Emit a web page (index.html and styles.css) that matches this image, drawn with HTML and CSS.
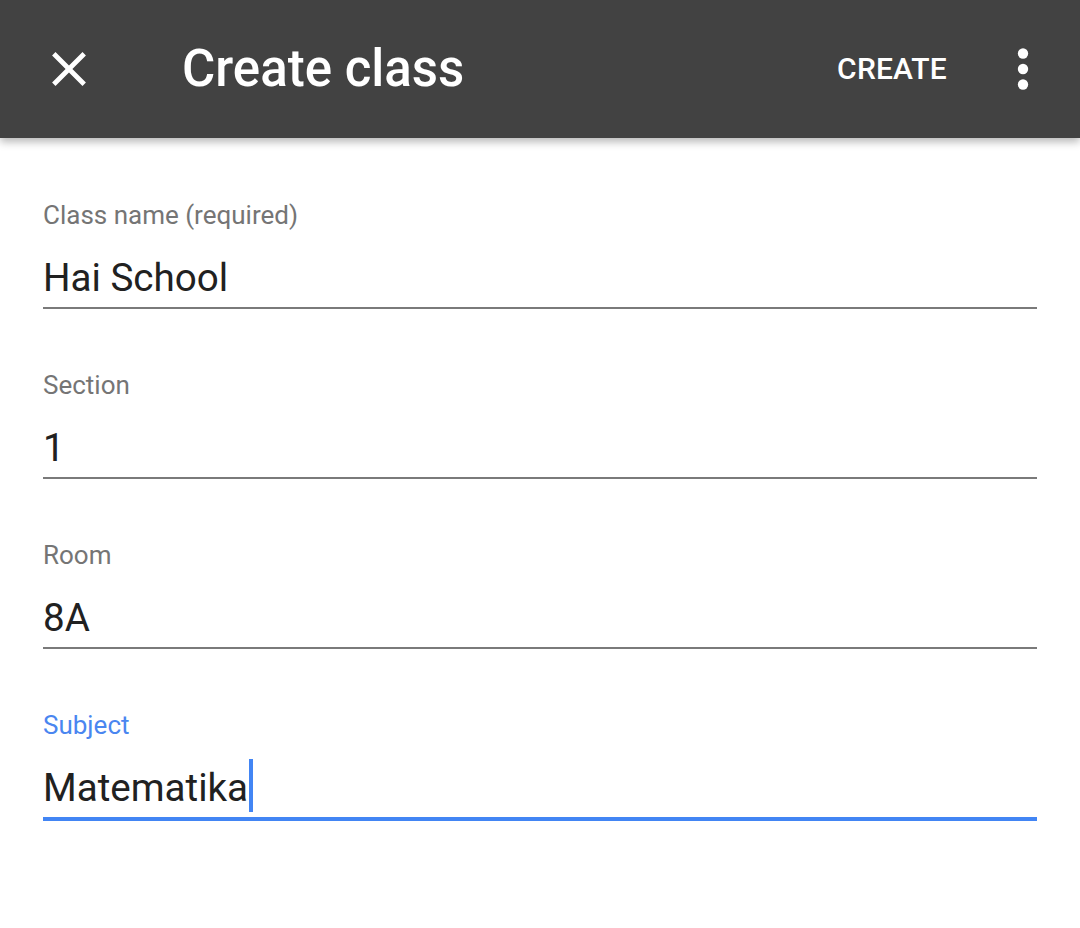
FILE: index.html
```html
<!DOCTYPE html>
<html lang="en">
<head>
<meta charset="utf-8">
<title>Create class</title>
<link rel="stylesheet" href="styles.css">
</head>
<body>
<header class="appbar">
  <svg class="icon-close" viewBox="0 0 24 24" aria-hidden="true"><path d="M19 6.41L17.59 5 12 10.59 6.41 5 5 6.41 10.59 12 5 17.59 6.41 19 12 13.41 17.59 19 19 17.59 13.41 12z"/></svg>
  <h1 class="title">Create class</h1>
  <span class="action">CREATE</span>
  <svg class="icon-more" viewBox="0 0 24 24" aria-hidden="true"><circle cx="12" cy="6" r="2"/><circle cx="12" cy="12" r="2"/><circle cx="12" cy="18" r="2"/></svg>
</header>
<main class="form">
  <div class="field">
    <div class="label">Class name (required)</div>
    <div class="value"><span>Hai School</span></div>
    <div class="line"></div>
  </div>
  <div class="field">
    <div class="label">Section</div>
    <div class="value"><span>1</span></div>
    <div class="line"></div>
  </div>
  <div class="field">
    <div class="label">Room</div>
    <div class="value"><span>8A</span></div>
    <div class="line"></div>
  </div>
  <div class="field focused">
    <div class="label">Subject</div>
    <div class="value"><span>Matematika</span><i class="cursor"></i></div>
    <div class="line"></div>
  </div>
</main>
</body>
</html>
```
FILE: styles.css
```css
html, body {
  margin: 0;
  padding: 0;
  background: #ffffff;
  font-family: Roboto, "Liberation Sans", sans-serif;
}

.appbar {
  height: 138px;
  background: #424242;
  display: flex;
  align-items: center;
  padding: 0 26px 0 40px;
  box-shadow: 0 4px 8px rgba(0, 0, 0, 0.28);
  position: relative;
  z-index: 1;
}

.icon-close {
  width: 58px;
  height: 58px;
  fill: #ffffff;
  flex: none;
}

.title {
  margin: 0 0 0 84px;
  font-size: 51px;
  line-height: 64px;
  font-weight: 500;
  color: #ffffff;
  flex: 1;
}

.action {
  font-size: 30px;
  line-height: 36px;
  font-weight: 500;
  color: #ffffff;
  letter-spacing: 0.2px;
}

.icon-more {
  width: 62px;
  height: 62px;
  fill: #ffffff;
  margin-left: 45px;
  flex: none;
}

.form {
  padding: 61px 43px 0 43px;
  display: flex;
  flex-direction: column;
  gap: 60px;
}

.field {
  display: flex;
  flex-direction: column;
}

.label {
  font-size: 26px;
  line-height: 32px;
  color: #757575;
}

.value {
  margin-top: 23px;
  font-size: 38.6px;
  line-height: 48px;
  color: #212121;
  display: flex;
  align-items: flex-end;
  height: 48px;
}

.line {
  margin-top: 5px;
  height: 2px;
  background: #7a7a7a;
}

.focused .label {
  color: #4a86f0;
}

.focused .line {
  height: 4px;
  background: #4285f4;
}

.cursor {
  display: block;
  width: 4px;
  height: 53px;
  margin-left: 1px;
  background: #4285f4;
  flex: none;
}
```
